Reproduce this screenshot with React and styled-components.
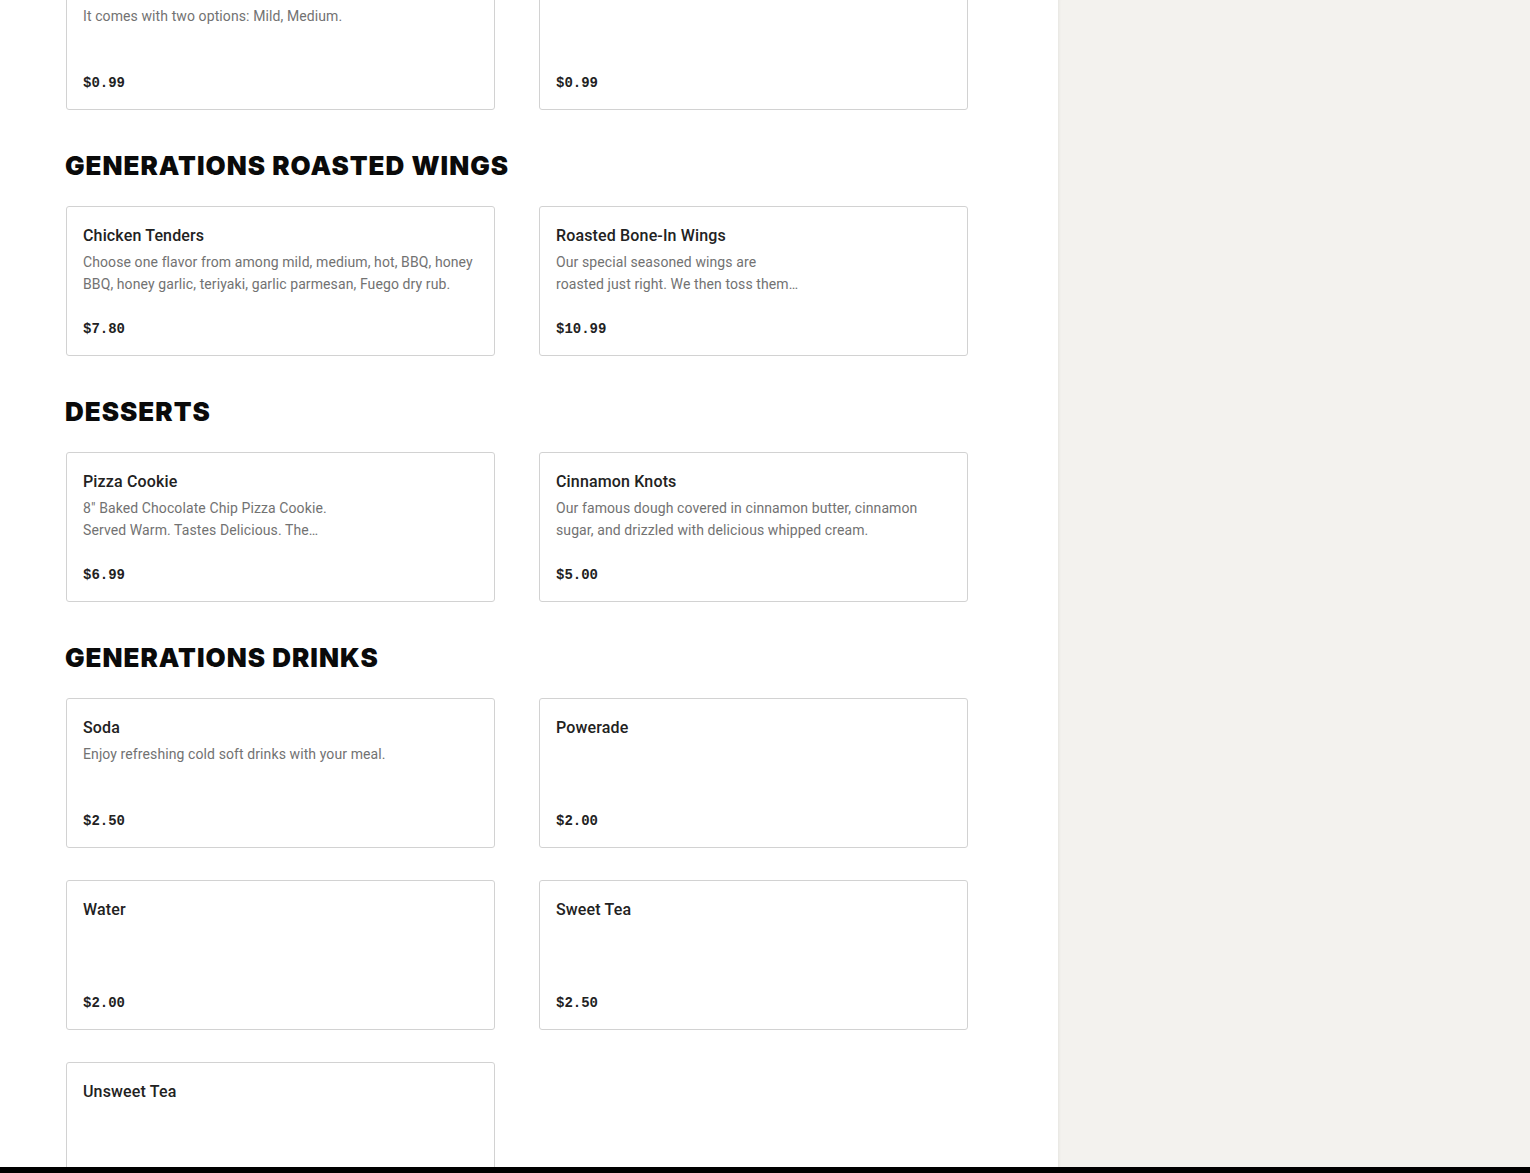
import React from "react";
import styled, { createGlobalStyle } from "styled-components";

const GlobalStyle = createGlobalStyle`
  html, body {
    margin: 0;
    padding: 0;
    background: #ffffff;
    font-family: "Roboto", "Liberation Sans", sans-serif;
    -webkit-font-smoothing: antialiased;
  }
  * { box-sizing: border-box; }
`;

const Page = styled.div`
  display: grid;
  grid-template-columns: 1058px 1fr;
  min-height: 100vh;
  overflow: hidden;
`;

const MenuColumn = styled.main`
  background: #ffffff;
  padding: 0 0 80px 66px;
  margin-top: -40px;
`;

const SidePanel = styled.aside`
  background: #f3f2ee;
  box-shadow: inset 3px 0 3px -2px rgba(0, 0, 0, 0.06);
`;

const Section = styled.section`
  & + & {
    margin-top: 40px;
  }
`;

const SectionTitle = styled.h2`
  margin: 0 0 24px -1px;
  font-family: "Inter", "Liberation Sans", sans-serif;
  font-weight: 900;
  font-size: 26px;
  line-height: 32px;
  letter-spacing: 1px;
  color: #0a0a0a;
  text-transform: uppercase;
`;

const CardGrid = styled.div`
  display: grid;
  grid-template-columns: repeat(2, 429px);
  column-gap: 44px;
  row-gap: 32px;
`;

const Card = styled.article`
  height: 150px;
  display: flex;
  flex-direction: column;
  padding: 17px 16px 16px 16px;
  border: 1px solid #d2d2d2;
  border-radius: 3px;
  background: #ffffff;
`;

const ItemName = styled.h3`
  margin: 0;
  font-family: "Roboto", "Liberation Sans", sans-serif;
  font-weight: 500;
  font-size: 16px;
  line-height: 24px;
  letter-spacing: 0.15px;
  color: #222222;
`;

const ItemDescription = styled.p`
  margin: 3px 0 0;
  max-width: ${(p) => (p.$narrow ? "250px" : "395px")};
  font-family: "Roboto", "Liberation Sans", sans-serif;
  font-size: 14px;
  line-height: 22px;
  letter-spacing: 0.1px;
  color: #727272;
`;

const Price = styled.span`
  margin-top: auto;
  font-family: "Liberation Mono", "Courier New", monospace;
  font-weight: 700;
  font-size: 14px;
  line-height: 20px;
  color: #222222;
`;

const BottomBar = styled.div`
  position: fixed;
  left: 0;
  right: 0;
  bottom: 0;
  height: 6px;
  background: #000000;
`;

const sections = [
  {
    title: null,
    items: [
      { name: "Wing Sauce", desc: "It comes with two options: Mild, Medium.", price: "$0.99" },
      { name: "Extra Dip", price: "$0.99" },
    ],
  },
  {
    title: "Generations Roasted Wings",
    items: [
      {
        name: "Chicken Tenders",
        desc: "Choose one flavor from among mild, medium, hot, BBQ, honey BBQ, honey garlic, teriyaki, garlic parmesan, Fuego dry rub.",
        price: "$7.80",
      },
      {
        name: "Roasted Bone-In Wings",
        desc: "Our special seasoned wings are roasted just right. We then toss them…",
        narrow: true,
        price: "$10.99",
      },
    ],
  },
  {
    title: "Desserts",
    items: [
      {
        name: "Pizza Cookie",
        desc: "8\" Baked Chocolate Chip Pizza Cookie. Served Warm. Tastes Delicious. The…",
        narrow: true,
        price: "$6.99",
      },
      {
        name: "Cinnamon Knots",
        desc: "Our famous dough covered in cinnamon butter, cinnamon sugar, and drizzled with delicious whipped cream.",
        price: "$5.00",
      },
    ],
  },
  {
    title: "Generations Drinks",
    items: [
      { name: "Soda", desc: "Enjoy refreshing cold soft drinks with your meal.", price: "$2.50" },
      { name: "Powerade", price: "$2.00" },
      { name: "Water", price: "$2.00" },
      { name: "Sweet Tea", price: "$2.50" },
      { name: "Unsweet Tea", price: "$2.50" },
    ],
  },
];

export default function App() {
  return (
    <>
      <GlobalStyle />
      <Page>
        <MenuColumn>
          {sections.map((section, i) => (
            <Section key={i}>
              {section.title && <SectionTitle>{section.title}</SectionTitle>}
              <CardGrid>
                {section.items.map((item) => (
                  <Card key={item.name}>
                    <ItemName>{item.name}</ItemName>
                    {item.desc && (
                      <ItemDescription $narrow={item.narrow}>{item.desc}</ItemDescription>
                    )}
                    <Price>{item.price}</Price>
                  </Card>
                ))}
              </CardGrid>
            </Section>
          ))}
        </MenuColumn>
        <SidePanel />
      </Page>
      <BottomBar />
    </>
  );
}
